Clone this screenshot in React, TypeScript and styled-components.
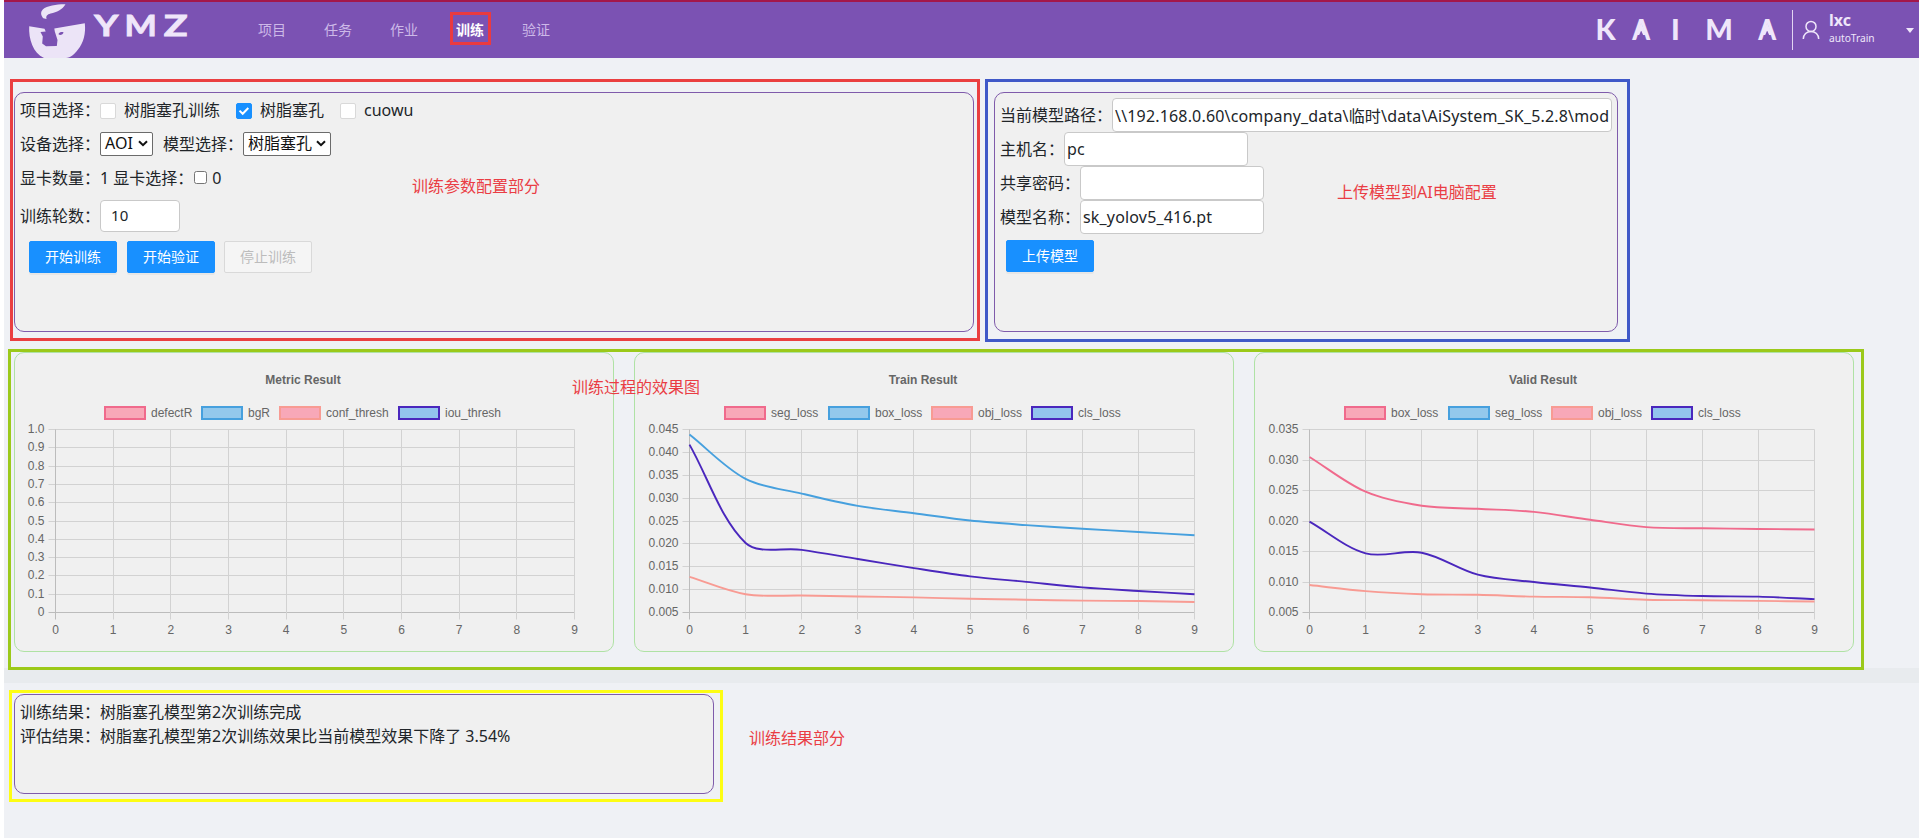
import React from "react";
import styled, { createGlobalStyle, css } from "styled-components";

const GlobalStyle = createGlobalStyle`
  * { box-sizing: border-box; }
  body {
    margin: 0;
    background: #fff;
    color: #212529;
    font: 16px/24px "Noto Sans", "Noto Sans CJK SC", sans-serif;
    overflow: hidden;
  }
`;

const Page = styled.div`
  margin-left: 4px;
  height: 838px;
  background: #eff1f5;
`;

/* ---------- header ---------- */

const Header = styled.header`
  display: flex;
  align-items: center;
  height: 58px;
  border-top: 2px solid #a3174a;
  background: #7b52b3;
  color: #efe6fa;
`;

const Brand = styled.div`
  display: flex;
  align-items: flex-start;
  width: 254px;
  height: 56px;
  padding-left: 24px;
`;

const BrandMark = styled.svg`
  display: block;
  width: 60px;
  height: 56px;
`;

const BrandName = styled.div`
  display: grid;
  grid-template-columns: 32px 37px 33px;
  justify-items: center;
  margin: 8px 0 0 2px;
  font: 700 29px/29px Lato, sans-serif;
`;

const BrandLetter = styled.span<{ $stretch: number }>`
  transform: scaleX(${(p) => p.$stretch});
  -webkit-text-stroke: 0.8px #efe6fa;
`;

const Nav = styled.nav`
  display: flex;
  gap: 38px;
`;

const NavItem = styled.a<{ $active?: boolean }>`
  position: relative;
  font-size: 14px;
  line-height: 20px;
  color: #cdb9e8;
  ${(p) =>
    p.$active &&
    css`
      color: #fff;
      font-weight: 700;
    `}
`;

const Company = styled.div`
  display: grid;
  grid-template-columns: 35px 36px 33px 54px 42px;
  justify-items: center;
  margin: 0 4px 3px auto;
  font: 900 29px/30px Lato, sans-serif;
`;

/* The crossbar of each A is closed above and cut away below, leaving a small notch. */
const CompanyLetter = styled.span<{ $notched?: boolean }>`
  position: relative;
  ${(p) =>
    p.$notched &&
    css`
      transform: scaleX(0.88);
      &::before,
      &::after {
        content: "";
        position: absolute;
        left: 50%;
        transform: translateX(-50%);
        clip-path: polygon(50% 0, 100% 100%, 0 100%);
      }
      &::before {
        top: 9px;
        width: 10px;
        height: 11px;
        background: #efe6fa;
      }
      &::after {
        top: 17px;
        width: 10px;
        height: 10px;
        background: #7b52b3;
      }
    `}
`;

const Account = styled.div`
  display: flex;
  align-items: center;
  width: 127px;
  height: 40px;
  padding: 0 5px 0 9px;
  border-left: 1px solid #e2d5f2;
`;

const AccountText = styled.div`
  flex: 1;
  margin-left: 9px;
`;

const UserName = styled.div`
  margin-top: -4px;
  font-size: 16px;
  line-height: 20px;
  font-weight: 700;
`;

const UserRole = styled.div`
  font-size: 10.2px;
  line-height: 15px;
  padding-top: 1px;
`;

const Caret = styled.span`
  border: 4.5px solid transparent;
  border-top: 5px solid #efe6fa;
  border-bottom: 0;
`;

/* ---------- panels ---------- */

const TopRow = styled.section`
  display: flex;
  gap: 20px;
  padding: 34px 0 20px 10px;
`;

const Panel = styled.div<{ $w: number; $h: number }>`
  position: relative;
  width: ${(p) => p.$w}px;
  height: ${(p) => p.$h}px;
  padding: 5px;
  border: 1px solid #7f5bab;
  border-radius: 10px;
  background: #f0f0f0;
`;

const Frame = styled.div<{ $color: string; $inset: string }>`
  position: absolute;
  inset: ${(p) => p.$inset};
  border: 3px solid ${(p) => p.$color};
  pointer-events: none;
`;

const Note = styled.div<{ $x: number; $y: number }>`
  position: absolute;
  left: ${(p) => p.$x}px;
  top: ${(p) => p.$y}px;
  color: #ea3d44;
  white-space: nowrap;
`;

const Line = styled.div<{ $h: number }>`
  display: flex;
  align-items: center;
  height: ${(p) => p.$h}px;
  white-space: pre;
`;

const CheckLabel = styled.label`
  display: flex;
  align-items: center;
  gap: 8px;
  margin-right: 16px;
`;

const Box = styled.span<{ $on?: boolean }>`
  display: flex;
  align-items: center;
  justify-content: center;
  width: 16px;
  height: 16px;
  margin-top: 2px;
  border: 1px solid ${(p) => (p.$on ? "#1890ff" : "#d9d9d9")};
  border-radius: 2px;
  background: ${(p) => (p.$on ? "#1890ff" : "#fff")};
`;

const SelectBox = styled.div<{ $w: number }>`
  display: flex;
  align-items: center;
  justify-content: space-between;
  width: ${(p) => p.$w}px;
  height: 24px;
  margin-right: 10px;
  padding: 0 4px 1px;
  border: 1px solid #6b6b6b;
  border-radius: 2px;
  background: #fff;
  color: #111;
`;

const Gpu = styled.span`
  width: 13px;
  height: 13px;
  margin: 0 5px 1px 1px;
  border: 1px solid #767676;
  border-radius: 2.5px;
  background: #fff;
`;

const Input = styled.input<{ $w: number; $small?: boolean }>`
  width: ${(p) => p.$w}px;
  height: ${(p) => (p.$small ? 32 : 34)}px;
  padding: ${(p) => (p.$small ? "0 11px 2px 10px" : "0 1px 0 2px")};
  border: 1px solid #c9c9c9;
  border-radius: 4px;
  outline: 0;
  background: #fff;
  color: #212529;
  font-family: inherit;
  font-size: ${(p) => (p.$small ? 15 : 16)}px;
  letter-spacing: 0.17px;
`;

const Buttons = styled.div<{ $margin: string }>`
  display: flex;
  gap: 10px;
  margin: ${(p) => p.$margin};
`;

const Button = styled.button`
  width: 88px;
  height: 32px;
  padding: 0;
  border: 1px solid #1890ff;
  border-radius: 2px;
  background: #1890ff;
  color: #fff;
  font: 14px/20px "Noto Sans", "Noto Sans CJK SC", sans-serif;
  box-shadow: 0 2px 0 rgba(0, 0, 0, 0.04);
  &:disabled {
    margin-left: -1px;
    border-color: #d9d9d9;
    background: #f5f5f5;
    color: #bcbcbc;
    box-shadow: none;
  }
`;

/* ---------- charts ---------- */

const ChartRow = styled.section`
  position: relative;
  display: flex;
  gap: 20px;
  height: 316px;
  padding-left: 10px;
`;

const ChartCard = styled.div`
  width: 600px;
  height: 300px;
  border: 1px solid #afe2a5;
  border-radius: 10px;
  background: #f0f0f0;
`;

const ChartSvg = styled.svg`
  display: block;
  margin: -1px;
  font: 12px "Liberation Sans", Arial, sans-serif;
  fill: #666;
`;

const Divider = styled.div`
  height: 15px;
  margin-bottom: 11px;
  background: #e8ebee;
`;

const ResultRow = styled.section`
  padding-left: 10px;
`;

type Series = { name: string; fill: string; stroke: string; at: number; data: number[] };
type ChartProps = {
  title: string;
  left: number;
  ticks: string[];
  series: Series[];
};

const PINK = { fill: "#f8a8b8", stroke: "#f06a8c" };
const BLUE = { fill: "#93c8ec", stroke: "#46a0de" };
const SALMON = { fill: "#f8a8b8", stroke: "#f89b93" };
const INDIGO = { fill: "#93c4ee", stroke: "#4a27bd" };

const TOP = 77.5;
const BOTTOM = 260.5;
const RIGHT = 560.5;

type Pt = { x: number; y: number };

/* Smooth line: control points are weighted by the distance to both neighbours. */
function smoothPath(pts: Pt[], tension = 0.33): string {
  const ctrl = pts.map((p, i) => {
    const a = pts[i - 1] ?? p;
    const b = pts[i + 1] ?? p;
    const d1 = Math.hypot(p.x - a.x, p.y - a.y);
    const d2 = Math.hypot(b.x - p.x, b.y - p.y);
    const f1 = (tension * d1) / (d1 + d2);
    const f2 = (tension * d2) / (d1 + d2);
    return {
      inX: p.x - f1 * (b.x - a.x),
      inY: p.y - f1 * (b.y - a.y),
      outX: p.x + f2 * (b.x - a.x),
      outY: p.y + f2 * (b.y - a.y),
    };
  });
  return pts
    .map((p, i) =>
      i === 0
        ? `M${p.x},${p.y}`
        : `C${ctrl[i - 1].outX},${ctrl[i - 1].outY} ${ctrl[i].inX},${ctrl[i].inY} ${p.x},${p.y}`
    )
    .join(" ");
}

function LineChart({ title, left, ticks, series }: ChartProps) {
  const max = Number(ticks[0]);
  const min = Number(ticks[ticks.length - 1]);
  const xAt = (i: number) => left + ((RIGHT - left) * i) / 9;
  const yAt = (v: number) => BOTTOM - ((v - min) / (max - min)) * (BOTTOM - TOP);
  const snap = (v: number) => Math.floor(v) + 0.5;
  return (
    <ChartCard>
      <ChartSvg width="600" height="300" viewBox="0 0 600 300">
        <text x="289" y="32" textAnchor="middle" fontWeight="700">
          {title}
        </text>
        {series.map((s) => (
          <g key={s.name}>
            <rect x={s.at} y="55" width="40" height="12" fill={s.fill} stroke={s.stroke} strokeWidth="2" />
            <text x={s.at + 46} y="65">
              {s.name}
            </text>
          </g>
        ))}
        {ticks.map((t, i) => {
          const y = snap(TOP + ((BOTTOM - TOP) * i) / (ticks.length - 1));
          const last = i === ticks.length - 1;
          return (
            <g key={t}>
              <path d={`M${left - 7},${y}H${RIGHT}`} stroke={last ? "#bcbcbc" : "#d2d2d2"} />
              <text x={left - 11} y={y + 3.5} textAnchor="end">
                {t}
              </text>
            </g>
          );
        })}
        {Array.from({ length: 10 }, (_, i) => (
          <g key={i}>
            <path d={`M${snap(xAt(i))},${TOP}V${BOTTOM + 7}`} stroke={i === 0 ? "#bcbcbc" : "#d2d2d2"} />
            <text x={xAt(i)} y="282" textAnchor="middle">
              {i}
            </text>
          </g>
        ))}
        {series
          .filter((s) => s.data.length > 0)
          .map((s) => (
            <path
              key={s.name}
              d={smoothPath(s.data.map((v, i) => ({ x: xAt(i), y: yAt(v) })))}
              fill="none"
              stroke={s.stroke}
              strokeWidth="1.9"
            />
          ))}
      </ChartSvg>
    </ChartCard>
  );
}

const charts: ChartProps[] = [
  {
    title: "Metric Result",
    left: 41.5,
    ticks: ["1.0", "0.9", "0.8", "0.7", "0.6", "0.5", "0.4", "0.3", "0.2", "0.1", "0"],
    series: [
      { name: "defectR", ...PINK, at: 91, data: [] },
      { name: "bgR", ...BLUE, at: 188, data: [] },
      { name: "conf_thresh", ...SALMON, at: 266, data: [] },
      { name: "iou_thresh", ...INDIGO, at: 385, data: [] },
    ],
  },
  {
    title: "Train Result",
    left: 55.5,
    ticks: ["0.045", "0.040", "0.035", "0.030", "0.025", "0.020", "0.015", "0.010", "0.005"],
    series: [
      { name: "seg_loss", ...PINK, at: 91, data: [] },
      { name: "box_loss", ...BLUE, at: 195, data: [0.0439, 0.0342, 0.031, 0.0283, 0.0267, 0.0251, 0.0241, 0.0233, 0.0226, 0.0219] },
      { name: "obj_loss", ...SALMON, at: 298, data: [0.0128, 0.009, 0.0087, 0.0085, 0.0083, 0.008, 0.0078, 0.0076, 0.0075, 0.0073] },
      { name: "cls_loss", ...INDIGO, at: 398, data: [0.0417, 0.0202, 0.0187, 0.0167, 0.0147, 0.0129, 0.0117, 0.0105, 0.0097, 0.009] },
    ],
  },
  {
    title: "Valid Result",
    left: 55.5,
    ticks: ["0.035", "0.030", "0.025", "0.020", "0.015", "0.010", "0.005"],
    series: [
      { name: "box_loss", ...PINK, at: 91, data: [0.0305, 0.0248, 0.0225, 0.022, 0.0215, 0.0202, 0.019, 0.0188, 0.0187, 0.0186] },
      { name: "seg_loss", ...BLUE, at: 195, data: [] },
      { name: "obj_loss", ...SALMON, at: 298, data: [0.0095, 0.0085, 0.008, 0.0079, 0.0076, 0.0075, 0.0071, 0.007, 0.0069, 0.0068] },
      { name: "cls_loss", ...INDIGO, at: 398, data: [0.0199, 0.0147, 0.0148, 0.0112, 0.01, 0.0091, 0.0081, 0.0077, 0.0076, 0.0072] },
    ],
  },
];

const Select = ({ value, width }: { value: string; width: number }) => (
  <SelectBox $w={width}>
    {value}
    <svg width="10" height="7" viewBox="0 0 10 7">
      <path d="M1 1.2 5 5.2 9 1.2" fill="none" stroke="#111" strokeWidth="2" />
    </svg>
  </SelectBox>
);

const Check = ({ label, on }: { label: string; on?: boolean }) => (
  <CheckLabel>
    <Box $on={on}>
      {on && (
        <svg width="12" height="10" viewBox="0 0 12 10">
          <path d="M1.5 4.6 4.7 7.8 10.3 2" fill="none" stroke="#fff" strokeWidth="2" />
        </svg>
      )}
    </Box>
    {label}
  </CheckLabel>
);

export default function App() {
  return (
    <>
      <GlobalStyle />
      <Page>
        <Header>
          <Brand>
            <BrandMark viewBox="28 2 60 56" fill="#ece4f7">
              <path d="M65.5 4.2C58 4 47 5.5 43 9.2c-3 3-2 6 .3 9L46.6 19c-1-3 .5-4.5 4-5.500C57 12 62 10 65.5 4.200Z" />
              <path d="M29.2 26.2 44.5 28.8 45.7 31.4 40.5 32 42.8 36.5 42.2 43.5 46 46.2 56.8 46 57.5 40 54.8 31.5 54.3 28.6 84.8 23.200C86 33 83.5 43 78 49.5 74.5 54 70.5 58 66 58H44C33 53 28.500 39 29.200 26.200Z" />
              <path d="M58.5 34c1-1.8 3-2.3 5-1.7-.5 2.2-2.4 3-4.5 2.500Z" fill="#7b52b3" />
            </BrandMark>
            <BrandName>
              <BrandLetter $stretch={1.28}>Y</BrandLetter>
              <BrandLetter $stretch={1.18}>M</BrandLetter>
              <BrandLetter $stretch={1.36}>Z</BrandLetter>
            </BrandName>
          </Brand>
          <Nav>
            <NavItem>项目</NavItem>
            <NavItem>任务</NavItem>
            <NavItem>作业</NavItem>
            <NavItem $active>
              训练
              <Frame $color="#ea3a40" $inset="-8px -7px -5px -6px" />
            </NavItem>
            <NavItem>验证</NavItem>
          </Nav>
          <Company>
            <CompanyLetter>K</CompanyLetter>
            <CompanyLetter $notched>A</CompanyLetter>
            <CompanyLetter>I</CompanyLetter>
            <CompanyLetter>M</CompanyLetter>
            <CompanyLetter $notched>A</CompanyLetter>
          </Company>
          <Account>
            <svg width="18" height="20" viewBox="0 0 18 20" fill="none" stroke="#efe6fa" strokeWidth="1.5">
              <circle cx="9" cy="6.4" r="5" />
              <path d="M1.3 19c0-4.5 3.4-7.6 7.7-7.6s7.7 3.1 7.7 7.6" />
            </svg>
            <AccountText>
              <UserName>lxc</UserName>
              <UserRole>autoTrain</UserRole>
            </AccountText>
            <Caret />
          </Account>
        </Header>

        <TopRow>
          <Panel $w={960} $h={240}>
            <Line $h={24}>
              项目选择：
              <Check label="树脂塞孔训练" />
              <Check label="树脂塞孔" on />
              <Check label="cuowu" />
            </Line>
            <Line $h={43.5}>
              设备选择：
              <Select value="AOI" width={53} />
              模型选择：
              <Select value="树脂塞孔" width={88} />
            </Line>
            <Line $h={25}>
              显卡数量：1 显卡选择：
              <Gpu />0
            </Line>
            <Line $h={50.5}>
              训练轮数：
              <Input $w={80} $small defaultValue="10" />
            </Line>
            <Buttons $margin="0 0 0 9px">
              <Button>开始训练</Button>
              <Button>开始验证</Button>
              <Button disabled>停止训练</Button>
            </Buttons>
            <Frame $color="#ea3f41" $inset="-14px -7px -10px -5px" />
            <Note $x={397} $y={81}>训练参数配置部分</Note>
          </Panel>
          <Panel $w={624} $h={240}>
            <Line $h={34}>
              当前模型路径：
              <Input $w={500} defaultValue={"\\\\192.168.0.60\\company_data\\临时\\data\\AiSystem_SK_5.2.8\\mod"} />
            </Line>
            <Line $h={34}>
              主机名：
              <Input $w={184} defaultValue="pc" />
            </Line>
            <Line $h={34}>
              共享密码：
              <Input $w={184} defaultValue="" />
            </Line>
            <Line $h={34}>
              模型名称：
              <Input $w={184} defaultValue="sk_yolov5_416.pt" />
            </Line>
            <Buttons $margin="6px 0 0 6px">
              <Button>上传模型</Button>
            </Buttons>
            <Frame $color="#3f58c8" $inset="-14px -13px -11px -10px" />
            <Note $x={342} $y={87}>上传模型到AI电脑配置</Note>
          </Panel>
        </TopRow>

        <ChartRow>
          {charts.map((c) => (
            <LineChart key={c.title} {...c} />
          ))}
          <Frame $color="#9bc91a" $inset="-3px 55px -2px 4px" />
          <Note $x={568} $y={23}>训练过程的效果图</Note>
        </ChartRow>
        <Divider />
        <ResultRow>
          <Panel $w={700} $h={100}>
            <Line $h={24}>训练结果：树脂塞孔模型第2次训练完成</Line>
            <Line $h={24}>评估结果：树脂塞孔模型第2次训练效果比当前模型效果下降了 3.54%</Line>
            <Frame $color="#fdfd14" $inset="-5px -10px -9px -6px" />
            <Note $x={734} $y={31}>训练结果部分</Note>
          </Panel>
        </ResultRow>
      </Page>
    </>
  );
}
